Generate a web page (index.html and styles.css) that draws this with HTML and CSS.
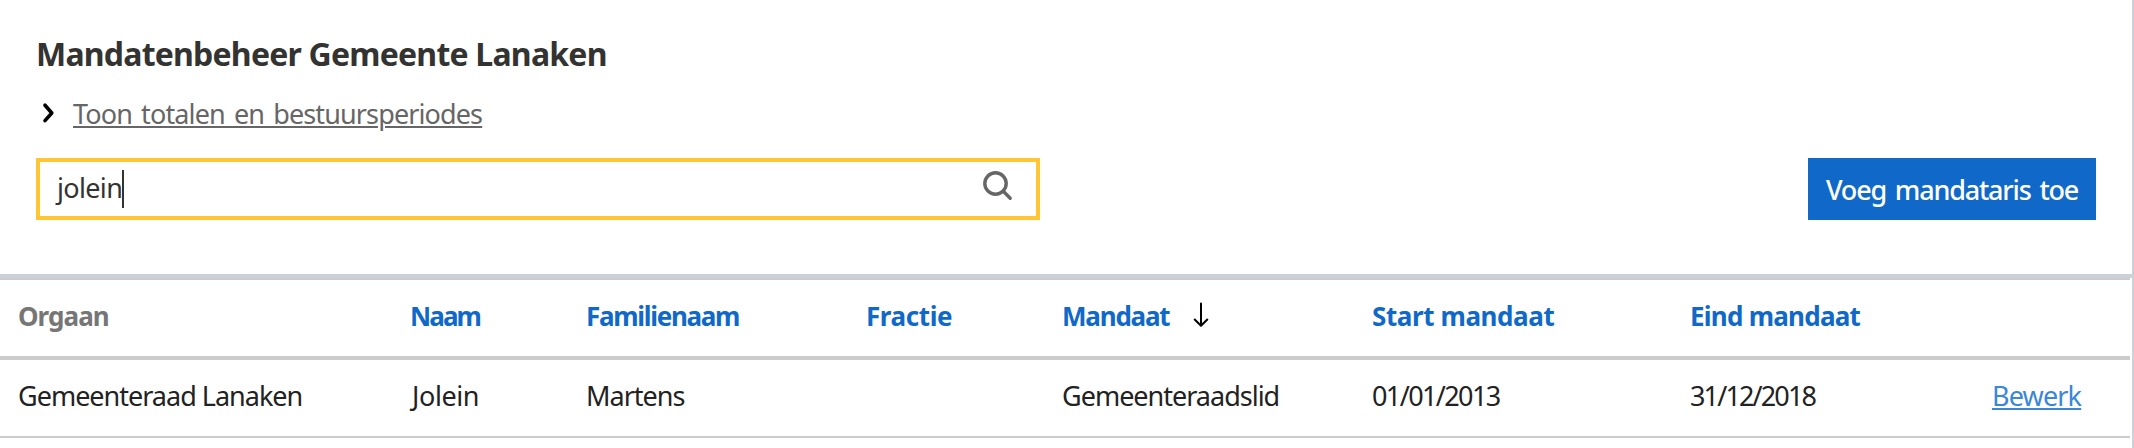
FILE: index.html
```html
<!DOCTYPE html>
<html lang="nl">
<head>
<meta charset="utf-8">
<title>Mandatenbeheer</title>
<link rel="stylesheet" href="styles.css">
</head>
<body>
<main class="page">
  <section class="intro">
    <h1 class="title">Mandatenbeheer Gemeente Lanaken</h1>
    <div class="toggle">
      <svg class="chevron" viewBox="0 0 14 22" width="14" height="22"><path d="M3 3.2 L9.8 11 L3 18.6"/></svg>
      <a class="toggle-link">Toon totalen en bestuursperiodes</a>
    </div>
    <div class="controls">
      <div class="search">
        <span class="query">jolein</span><span class="caret"></span>
        <svg class="search-icon" viewBox="0 0 30 30" width="30" height="30"><circle cx="12.5" cy="12.5" r="10.7"/><path d="M20.3 20.3 L27.2 27.2"/></svg>
      </div>
      <button class="button">Voeg mandataris toe</button>
    </div>
  </section>
  <div class="table">
    <div class="row head">
      <span class="orgaan">Orgaan</span>
      <span class="naam">Naam</span>
      <span class="familie">Familienaam</span>
      <span class="fractie">Fractie</span>
      <span class="mandaat">Mandaat<svg class="arrow" viewBox="0 0 16 26" width="16" height="26"><path d="M8 1.5 V23.5 M1.7 17.5 L8 23.8 L14.3 17.5"/></svg></span>
      <span class="start">Start mandaat</span>
      <span class="eind">Eind mandaat</span>
      <span></span>
    </div>
    <div class="row body">
      <span>Gemeenteraad Lanaken</span>
      <span class="voornaam">Jolein</span>
      <span>Martens</span>
      <span></span>
      <span>Gemeenteraadslid</span>
      <span class="date">01/01/2013</span>
      <span class="date end">31/12/2018</span>
      <span><a class="edit">Bewerk</a></span>
    </div>
  </div>
</main>
</body>
</html>
```
FILE: styles.css
```css
* { box-sizing: border-box; }
body {
  margin: 0;
  background: #fff;
  font-family: "Noto Sans", sans-serif;
  font-size: 27px;
  line-height: 36px;
  color: #222;
}
.page {
  height: 448px;
  border-right: 2px solid #cbd2d9;
  overflow: hidden;
}
.intro {
  height: 278px;
  padding: 34px 36px 0;
  border-bottom: 4px solid #cbd2d9;
}
.title {
  margin: 0 0 22px;
  font-size: 32px;
  line-height: 40px;
  font-weight: 700;
  letter-spacing: -0.78px;
  color: #333332;
}
.toggle {
  display: flex;
  align-items: center;
  height: 36px;
  margin-bottom: 26px;
  padding-left: 5px;
}
.chevron {
  margin: -3px 17px 0 1px;
  fill: none;
  stroke: #000;
  stroke-width: 3.6;
  stroke-linecap: round;
  stroke-linejoin: round;
}
.toggle-link {
  letter-spacing: -0.88px;
  word-spacing: 3px;
  color: #666;
  text-decoration: underline;
  text-decoration-thickness: 2px;
  text-underline-offset: 2px;
}
.controls {
  display: flex;
  justify-content: space-between;
}
.search {
  display: flex;
  align-items: center;
  width: 1004px;
  height: 62px;
  padding: 0 23px 1px 17px;
  border: 4px solid #ffc533;
  color: #333332;
}
.query {
  margin-top: -1px;
  letter-spacing: -0.66px;
}
.caret {
  width: 2px;
  height: 38px;
  background: #333332;
}
.search-icon {
  margin: -6px 0 0 auto;
  fill: none;
  stroke: #666;
  stroke-width: 3.4;
  stroke-linecap: round;
}
.button {
  width: 288px;
  height: 62px;
  padding: 2px 0 0 18px;
  border: 0;
  background: #1069c9;
  color: #fff;
  font: 500 27px/36px "Noto Sans", sans-serif;
  letter-spacing: -1.2px;
  word-spacing: 3px;
  text-align: left;
  white-space: nowrap;
}
.table {
  width: 2130px;
  border-top: 2px solid #ccc;
}
.row {
  display: grid;
  grid-template-columns: 392px 176px 280px 196px 310px 318px 302px 1fr;
  align-items: center;
  padding-left: 18px;
  white-space: nowrap;
}
.head {
  height: 80px;
  padding-bottom: 4px;
  border-bottom: 4px solid #ccc;
  font-size: 26px;
  font-weight: 700;
  color: #1069c9;
}
.orgaan { color: #767676; letter-spacing: -0.95px; }
.naam { letter-spacing: -1.9px; }
.familie { letter-spacing: -1.3px; }
.fractie { letter-spacing: -0.4px; }
.mandaat { letter-spacing: -1.2px; }
.start { letter-spacing: -0.4px; }
.eind { letter-spacing: -0.75px; }
.arrow {
  margin-left: 24px;
  vertical-align: -2px;
  fill: none;
  stroke: #000;
  stroke-width: 2;
  stroke-linecap: round;
  stroke-linejoin: round;
}
.body {
  height: 78px;
  padding-bottom: 5px;
  border-bottom: 2px solid #ccc;
  letter-spacing: -1px;
}
.voornaam { letter-spacing: -0.4px; padding-left: 2px; }
.date { letter-spacing: -1.6px; }
.end { letter-spacing: -1.85px; }
.edit {
  color: #3a86d8;
  letter-spacing: -0.85px;
  text-decoration: underline;
  text-decoration-thickness: 2px;
  text-underline-offset: 2px;
}
```
